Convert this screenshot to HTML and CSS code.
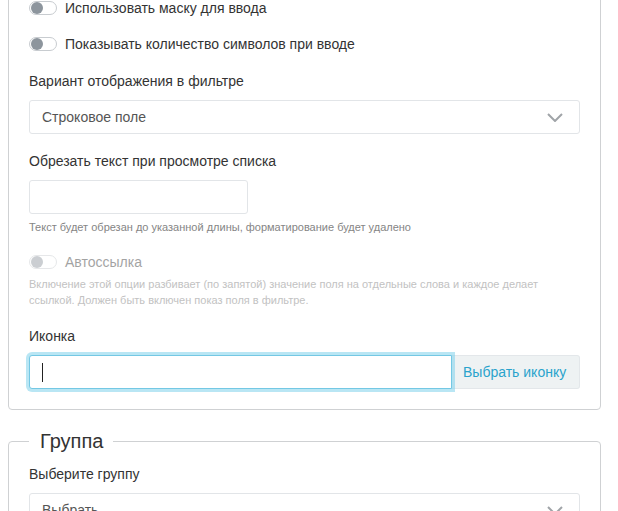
FILE: index.html
```html
<!DOCTYPE html>
<html lang="ru">
<head>
<meta charset="utf-8">
<link rel="stylesheet" href="styles.css">
</head>
<body>
<div class="page">
  <fieldset class="panel panel-top">
    <div class="toggle-row row-gap-16">
      <span class="toggle"><span class="knob"></span></span>
      <span class="toggle-text">Использовать маску для ввода</span>
    </div>
    <div class="toggle-row row-gap-17">
      <span class="toggle"><span class="knob"></span></span>
      <span class="toggle-text">Показывать количество символов при вводе</span>
    </div>
    <div class="group">
      <div class="label">Вариант отображения в фильтре</div>
      <div class="select">
        <span class="select-text">Строковое поле</span>
        <svg class="chevron" width="16" height="9" viewBox="0 0 16 9"><polyline points="1,1 8,8 15,1" fill="none" stroke="#a0a4a8" stroke-width="2"/></svg>
      </div>
    </div>
    <div class="group">
      <div class="label">Обрезать текст при просмотре списка</div>
      <div class="input input-short"></div>
      <div class="help">Текст будет обрезан до указанной длины, форматирование будет удалено</div>
    </div>
    <div class="group group-disabled">
      <div class="toggle-row">
        <span class="toggle"><span class="knob"></span></span>
        <span class="toggle-text">Автоссылка</span>
      </div>
      <div class="help help-disabled">Включение этой опции разбивает (по запятой) значение поля на отдельные слова и каждое делает ссылкой. Должен быть включен показ поля в фильтре.</div>
    </div>
    <div class="group group-last">
      <div class="label">Иконка</div>
      <div class="input-group">
        <div class="input input-focus"><span class="caret"></span></div>
        <button class="btn-addon" type="button">Выбрать иконку</button>
      </div>
    </div>
  </fieldset>
  <fieldset class="panel">
    <legend class="legend">Группа</legend>
    <div class="group">
      <div class="label">Выберите группу</div>
      <div class="select">
        <span class="select-text">Выбрать</span>
        <svg class="chevron" width="16" height="9" viewBox="0 0 16 9"><polyline points="1,1 8,8 15,1" fill="none" stroke="#a0a4a8" stroke-width="2"/></svg>
      </div>
    </div>
  </fieldset>
</div>
</body>
</html>
```
FILE: styles.css
```css
html, body {
  margin: 0;
  padding: 0;
  background: #fff;
  font-family: "Liberation Sans", Arial, sans-serif;
  font-size: 14px;
  color: #333;
  overflow: hidden;
}

.page {
  width: 593px;
  padding-left: 8px;
  margin-top: -40px;
}

.panel {
  margin: 0 0 19px;
  padding: 0 20px 20px;
  border: 1px solid #cfd1d3;
  border-radius: 4px;
  min-width: 0;
}

.panel-top {
  padding-top: 37px;
}

.legend {
  padding: 0 10px 0 11px;
  font-size: 20px;
  line-height: 24px;
  color: #333;
}

.legend + .group {
  margin-top: 11px;
}

.toggle-row {
  display: flex;
  align-items: center;
  gap: 8px;
  height: 20px;
}

.row-gap-16 { margin-bottom: 16px; }
.row-gap-17 { margin-bottom: 17px; }

.toggle {
  display: flex;
  align-items: center;
  box-sizing: border-box;
  width: 28px;
  height: 14px;
  border: 1px solid #c8ccd0;
  border-radius: 8px;
  background: #fff;
  padding-left: 1px;
}

.knob {
  width: 12px;
  height: 12px;
  border-radius: 50%;
  background: #8d959d;
}

.toggle-text {
  line-height: 20px;
  color: #333;
}

.group {
  margin-bottom: 17px;
}

.group-disabled {
  margin-bottom: 18px;
}

.group-disabled .toggle-row {
  opacity: 0.45;
}

.group-last {
  margin-bottom: 0;
}

.label {
  line-height: 20px;
  margin-bottom: 9px;
  color: #333;
}

.select {
  box-sizing: border-box;
  height: 34px;
  border: 1px solid #e2e5e8;
  border-radius: 3px;
  display: flex;
  align-items: center;
  justify-content: space-between;
  padding: 0 16px 0 12px;
  background: #fff;
}

.select-text {
  color: #555;
}

.chevron {
  display: block;
}

.input {
  box-sizing: border-box;
  height: 34px;
  border: 1px solid #e2e5e8;
  border-radius: 3px;
  background: #fff;
}

.input-short {
  width: 219px;
}

.help {
  margin-top: 5px;
  font-size: 11px;
  line-height: 16px;
  color: #858585;
}

.help-disabled {
  margin-top: 4px;
  color: #c2c2c2;
}

.input-group {
  display: flex;
  height: 34px;
}

.input-focus {
  flex: 1;
  border-color: #74c8e4;
  border-radius: 3px 0 0 3px;
  box-shadow: 0 0 0 3px rgba(128, 210, 235, 0.55);
  display: flex;
  align-items: center;
  padding-left: 12px;
  position: relative;
  z-index: 1;
}

.caret {
  width: 1px;
  height: 19px;
  background: #222;
}

.btn-addon {
  box-sizing: border-box;
  width: 128px;
  height: 34px;
  border: 1px solid #e3e7ea;
  border-left: none;
  border-radius: 0 3px 3px 0;
  background: #eef2f3;
  color: #2aa3cc;
  font-family: "Liberation Sans", Arial, sans-serif;
  font-size: 14px;
  padding: 0 12px 0 11px;
  text-align: left;
}
```
